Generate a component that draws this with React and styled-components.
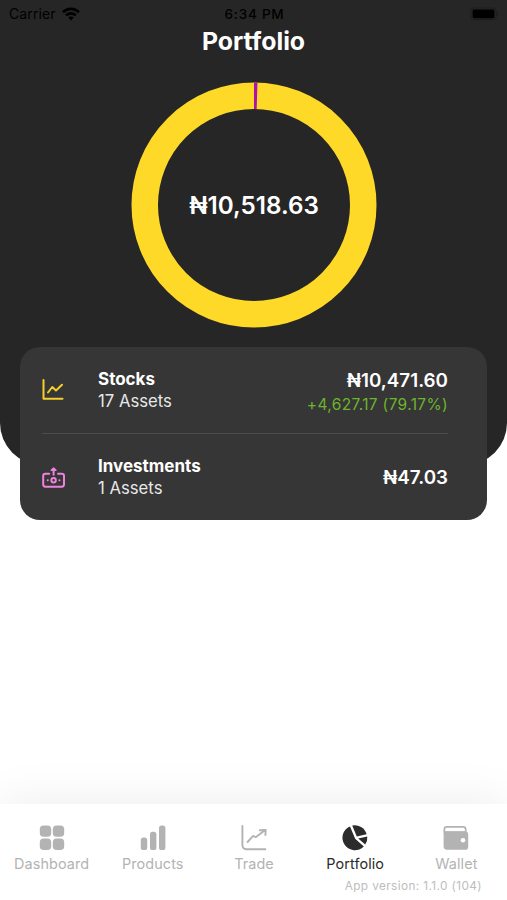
import React from 'react'
import styled, { createGlobalStyle } from 'styled-components';

const GlobalStyle = createGlobalStyle`
  * {
    box-sizing: border-box;
  }
  body {
    margin: 0;
    background: #ffffff;
    font-family: Inter, "Liberation Sans", sans-serif;
  }
`

const Screen = styled.div`
  display: flex;
  flex-direction: column;
  width: 507px;
  height: 900px;
  overflow: hidden;
  background: #ffffff;
`

const Hero = styled.div`
  height: 465px;
  flex-shrink: 0;
  background: #262626;
  border-radius: 0 0 42px 42px;
`

const StatusBar = styled.div`
  display: grid;
  grid-template-columns: 1fr auto 1fr;
  align-items: center;
  height: 27px;
  padding: 0 7px 0 9px;
  color: #000000;
`

const Carrier = styled.div`
  display: flex;
  align-items: center;
  gap: 6px;
  font-size: 14px;
  letter-spacing: 0.1px;
`

const Clock = styled.div`
  font-size: 13.5px;
  font-weight: 500;
  letter-spacing: 0.75px;
`

const BatterySlot = styled.div`
  display: flex;
  justify-content: flex-end;
`

const Title = styled.h1`
  margin: 0;
  height: 28px;
  line-height: 28px;
  text-align: center;
  font-size: 24.8px;
  font-weight: 700;
  color: #ffffff;
`

const ChartArea = styled.div`
  display: grid;
  justify-content: center;
  margin-top: 27px;
  padding-left: 1px;

  & > * {
    grid-area: 1 / 1;
  }
`

const ChartTotal = styled.div`
  align-self: center;
  justify-self: center;
  font-size: 24.2px;
  font-weight: 600;
  color: #ffffff;
`

const Card = styled.div`
  height: 173px;
  flex-shrink: 0;
  margin: -118px 20px 0 20px;
  padding: 0 39px 0 22px;
  border-radius: 20px;
  background: #363636;
`

const AssetRow = styled.div`
  display: grid;
  grid-template-columns: 56px 1fr auto;
  align-items: center;
  height: 87px;
  border-bottom: ${props => (props.$divided ? '1px solid #4b4b4b' : 'none')};
`

const AssetName = styled.div`
  line-height: 22px;
  font-size: 17px;
  font-weight: 700;
  color: #ffffff;
`

const AssetCount = styled.div`
  line-height: 23px;
  font-size: 16.7px;
  color: #e8e8e8;
`

const AssetFigures = styled.div`
  text-align: right;
`

const AssetValue = styled.div`
  line-height: 24px;
  font-size: 18.8px;
  font-weight: 600;
  color: #ffffff;
`

const AssetGain = styled.div`
  margin-bottom: -6px;
  line-height: 24px;
  font-size: 15.5px;
  letter-spacing: 0.35px;
  color: #6cb52d;
`

const Spacer = styled.div`
  flex: 1;
`

const TabBar = styled.div`
  height: 96px;
  flex-shrink: 0;
  background: #ffffff;
  box-shadow: 0 0 50px rgba(0, 0, 0, 0.08);
`

const Tabs = styled.div`
  display: grid;
  grid-template-columns: repeat(5, 101.2px);
  justify-content: center;
  padding: 20px 0 0 1px;
`

const Tab = styled.div`
  display: flex;
  flex-direction: column;
  align-items: center;
  color: ${props => (props.$active ? '#2b2b2b' : '#b3b3b3')};
`

const TabLabel = styled.div`
  margin-top: 4px;
  line-height: 18px;
  font-size: 14.4px;
  letter-spacing: 0.1px;
`

const Version = styled.div`
  padding: 6px 25px 0 0;
  line-height: 15px;
  text-align: right;
  font-size: 11.8px;
  letter-spacing: 0.4px;
  color: #bdbdbd;
`

const WifiIcon = () => (
  <svg width="18" height="14" viewBox="0 0 18 14" fill="none" stroke="currentColor" strokeWidth="2.6">
    <path d="M1 5.2C5.5 .8 12.5 .8 17 5.2" />
    <path d="M4.1 8.4C6.9 5.7 11.1 5.7 13.9 8.4" />
    <path d="M9 13.6L6.2 10.6C7.8 9.2 10.2 9.2 11.8 10.6Z" fill="currentColor" stroke="none" />
  </svg>
)

const BatteryIcon = () => (
  <svg width="30" height="14" viewBox="0 0 30 14">
    <rect x="0.8" y="1" width="25.4" height="11.6" rx="3" fill="none" stroke="#1c1c1c" />
    <rect x="2.6" y="2.6" width="21.8" height="8.6" rx="1.4" fill="#000000" />
    <path d="M27.4 4.8C29 5.4 29 8.4 27.4 9Z" fill="#1c1c1c" />
  </svg>
)

const CENTER = 123
const OUTER = 122.5
const INNER = 96

const Donut = ({ share }) => {
  const angle = share * Math.PI * 2
  const point = r => `${CENTER + r * Math.sin(angle)} ${CENTER - r * Math.cos(angle)}`
  return (
    <svg width="246" height="246" viewBox="0 0 246 246">
      <circle cx={CENTER} cy={CENTER} r={(OUTER + INNER) / 2} fill="none" stroke="#ffd928" strokeWidth={OUTER - INNER} />
      <path
        d={`M${CENTER} ${CENTER - OUTER}L${point(OUTER)}L${point(INNER)}L${CENTER} ${CENTER - INNER}Z`}
        fill="#b012a8"
      />
    </svg>
  )
}

const StocksIcon = () => (
  <svg width="24" height="24" viewBox="0 0 24 24" fill="none" stroke="#f4d02c" strokeWidth="2" strokeLinecap="round" strokeLinejoin="round">
    <path d="M1.5 2V20.8H20.5" />
    <path d="M6 14.5L10.3 9L14 12.4L20 6.8" />
  </svg>
)

const InvestmentsIcon = () => (
  <svg width="24" height="24" viewBox="0 0 24 24" fill="none" stroke="#ee82dc" strokeWidth="2" strokeLinecap="round" strokeLinejoin="round">
    <path d="M7.2 7.7H3.4C1.9 7.7 1.2 8.4 1.2 9.8V18.6C1.2 20 1.9 20.7 3.4 20.7H19.8C21.3 20.7 22 20 22 18.6V9.8C22 8.4 21.3 7.7 19.8 7.7H16" />
    <circle cx="11.6" cy="14.2" r="2.2" />
    <path d="M11.6 8.8V3" />
    <path d="M9.2 4.2L11.6 1.9L14 4.2Z" fill="#ee82dc" strokeWidth="1.4" />
    <path d="M5.7 14.2H5.8M17.4 14.2H17.5" />
  </svg>
)

const DashboardIcon = () => (
  <svg width="26" height="27" viewBox="0 0 26 27" fill="currentColor">
    <rect x="0.8" y="1.4" width="11.4" height="11.4" rx="3.8" />
    <rect x="13.8" y="1.4" width="11.4" height="11.4" rx="3.8" />
    <rect x="0.8" y="14.6" width="11.4" height="11.4" rx="3.8" />
    <rect x="13.8" y="14.6" width="11.4" height="11.4" rx="3.8" />
  </svg>
)

const ProductsIcon = () => (
  <svg width="26" height="27" viewBox="0 0 26 27" fill="currentColor">
    <rect x="0.8" y="13.6" width="6.4" height="12.4" rx="2.6" />
    <rect x="10" y="7.8" width="6.4" height="18.2" rx="2.6" />
    <rect x="19" y="1.4" width="6.4" height="24.6" rx="2.6" />
  </svg>
)

const TradeIcon = () => (
  <svg width="26" height="27" viewBox="0 0 26 27" fill="none" stroke="currentColor" strokeWidth="1.9" strokeLinecap="round" strokeLinejoin="round">
    <path d="M1.4 2V21C1.4 23.5 2.8 25.2 5.4 25.2H24.4" />
    <path d="M6.6 18L11.4 12.7C12 12 12.8 12 13.5 12.6C14.4 13.4 15.3 13 16 12.2L23.6 6.6M18.8 6.2L24.7 5.9L24.4 11" />
  </svg>
)

const PortfolioIcon = () => (
  <svg width="26" height="27" viewBox="0 0 26 27" fill="currentColor">
    <path d="M8 2.4L13.2 14.8L21.8 22.4A12.4 12.4 0 1 1 8 2.4Z" />
    <path d="M10.2 1.6A12.4 12.4 0 0 1 24.6 10.2L14.8 12.6Z" />
    <path d="M16.2 14.4L25.3 12.4A12.4 12.4 0 0 1 23.2 20.5Z" />
  </svg>
)

const WalletIcon = () => (
  <svg width="26" height="27" viewBox="0 0 26 27">
    <path d="M3.8 2.8H20.2C21.8 2.8 22.7 3.7 22.7 5.3V8H1.4V5.1C1.4 3.7 2.3 2.8 3.8 2.8Z" fill="none" stroke="currentColor" strokeWidth="1.7" />
    <path d="M.6 6.6C1.4 7.4 2.2 7.6 3.4 7.6H22.2C24.2 7.6 25.2 8.7 25.2 10.6V22.7C25.2 24.8 24.2 25.8 22.2 25.8H3.8C1.7 25.8.6 24.6.6 22.6Z" fill="currentColor" />
    <circle cx="20" cy="16.3" r="2.3" fill="#ffffff" />
  </svg>
)

const assets = [
  { name: 'Stocks', count: 17, value: '₦10,471.60', gain: '+4,627.17 (79.17%)', Icon: StocksIcon },
  { name: 'Investments', count: 1, value: '₦47.03', Icon: InvestmentsIcon },
]

const tabs = [
  { label: 'Dashboard', Icon: DashboardIcon },
  { label: 'Products', Icon: ProductsIcon },
  { label: 'Trade', Icon: TradeIcon },
  { label: 'Portfolio', Icon: PortfolioIcon },
  { label: 'Wallet', Icon: WalletIcon },
]

const App = () => (
  <>
    <GlobalStyle />
    <Screen>
      <Hero>
        <StatusBar>
          <Carrier>Carrier <WifiIcon /></Carrier>
          <Clock>6:34 PM</Clock>
          <BatterySlot><BatteryIcon /></BatterySlot>
        </StatusBar>
        <Title>Portfolio</Title>
        <ChartArea>
          <Donut share={47.03 / 10518.63} />
          <ChartTotal>₦10,518.63</ChartTotal>
        </ChartArea>
      </Hero>
      <Card>
        {assets.map(({ name, count, value, gain, Icon }, index) => (
          <AssetRow key={name} $divided={index < assets.length - 1}>
            <Icon />
            <div>
              <AssetName>{name}</AssetName>
              <AssetCount>{count} Assets</AssetCount>
            </div>
            <AssetFigures>
              <AssetValue>{value}</AssetValue>
              {gain && <AssetGain>{gain}</AssetGain>}
            </AssetFigures>
          </AssetRow>
        ))}
      </Card>
      <Spacer />
      <TabBar>
        <Tabs>
          {tabs.map(({ label, Icon }) => (
            <Tab key={label} $active={label === 'Portfolio'}>
              <Icon />
              <TabLabel>{label}</TabLabel>
            </Tab>
          ))}
        </Tabs>
        <Version>App version: 1.1.0 (104)</Version>
      </TabBar>
    </Screen>
  </>
)

export default App
